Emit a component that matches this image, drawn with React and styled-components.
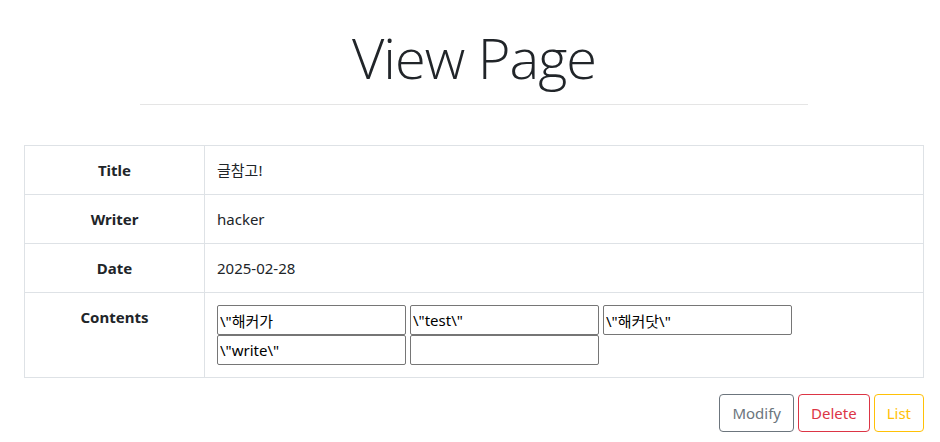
import React from 'react';
import styled, { createGlobalStyle } from 'styled-components';

const GlobalStyle = createGlobalStyle`
  body {
    margin: 0;
    background: #fff;
    color: #212529;
    font-family: "Noto Sans", "Noto Sans CJK KR", sans-serif;
    font-size: 16px;
    line-height: 1.5;
  }
`;

const Page = styled.main`
  width: 900px;
  margin: 0 16px 0 24px;
  padding-top: 24px;
`;

const Heading = styled.h1`
  margin: 0;
  text-align: center;
  font-family: "Open Sans", "Noto Sans", sans-serif;
  font-weight: 300;
  font-size: 56px;
  line-height: 1.2;
  letter-spacing: -1px;
`;

const Rule = styled.hr`
  width: 668px;
  margin: 13px auto 40px;
  border: 0;
  border-top: 1px solid #e5e5e5;
`;

const Table = styled.table`
  width: 100%;
  border-collapse: collapse;
  border: 1px solid #dee2e6;
`;

const Label = styled.th`
  width: 155px;
  padding: 12px;
  border: 1px solid #dee2e6;
  font-weight: 700;
  font-size: 15px;
  line-height: 24px;
  text-align: center;
  vertical-align: top;
`;

const Value = styled.td`
  padding: 12px;
  border: 1px solid #dee2e6;
  font-size: 15px;
  line-height: 24px;
  vertical-align: top;
`;

const Fields = styled.div`
  display: flex;
  flex-wrap: wrap;
  column-gap: 4px;
  width: 580px;
`;

const Field = styled.input`
  box-sizing: border-box;
  width: 189px;
  height: 30px;
  margin: 0;
  padding: 2px 2px;
  border: 1px solid #767676;
  border-radius: 2px;
  font-family: "Noto Sans", "Noto Sans CJK KR", sans-serif;
  font-size: 15px;
  color: #000;
`;

const Actions = styled.div`
  display: flex;
  justify-content: flex-end;
  gap: 4px;
  margin-top: 16px;
`;

const tones = {
  secondary: '#6c757d',
  danger: '#dc3545',
  warning: '#ffc107',
};

const Button = styled.button`
  height: 38px;
  padding: 0 12px;
  background: #fff;
  border: 1px solid ${p => tones[p.$tone]};
  border-radius: 4px;
  color: ${p => tones[p.$tone]};
  font-family: "Noto Sans", sans-serif;
  font-size: 15px;
`;

const rows = [
  ['Title', '글참고!'],
  ['Writer', 'hacker'],
  ['Date', '2025-02-28'],
];

const contents = ['\\"해커가', '\\"test\\"', '\\"해커닷\\"', '\\"write\\"', ''];

export default function App() {
  return (
    <>
      <GlobalStyle />
      <Page>
        <Heading>View Page</Heading>
        <Rule />
        <Table>
          <tbody>
            {rows.map(([k, v]) => (
              <tr key={k}>
                <Label>{k}</Label>
                <Value>{v}</Value>
              </tr>
            ))}
            <tr>
              <Label>Contents</Label>
              <Value>
                <Fields>
                  {contents.map((c, i) => (
                    <Field key={i} defaultValue={c} readOnly />
                  ))}
                </Fields>
              </Value>
            </tr>
          </tbody>
        </Table>
        <Actions>
          <Button $tone="secondary">Modify</Button>
          <Button $tone="danger">Delete</Button>
          <Button $tone="warning">List</Button>
        </Actions>
      </Page>
    </>
  );
}
